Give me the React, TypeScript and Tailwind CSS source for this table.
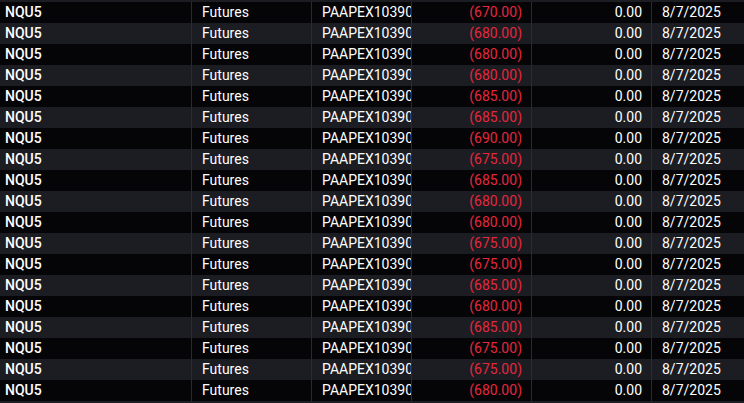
import React from "react";

const values = [
  "670.00", "680.00", "680.00", "680.00", "685.00", "685.00", "690.00", "675.00",
  "685.00", "680.00", "680.00", "675.00", "675.00", "685.00", "680.00", "685.00",
  "675.00", "675.00", "680.00",
];

export default function App() {
  return (
    <div
      className="w-[744px] h-[403px] overflow-hidden bg-[#050507] border-t-2 border-b-2 border-[#1c1d22] text-white text-[14px]"
      style={{ fontFamily: "Roboto, 'Liberation Sans', sans-serif" }}
    >
      {values.map((v, i) => (
        <div
          key={i}
          className={`flex h-[21px] items-center leading-[21px] ${i % 2 === 0 ? "bg-[#050507]" : "bg-[#1c1d22]"}`}
        >
          <div className="w-[191px] shrink-0 pl-[5px] font-medium whitespace-nowrap overflow-hidden">NQU5</div>
          <div className="w-[120px] shrink-0 border-l border-[#2a2b30] pl-[10px] whitespace-nowrap overflow-hidden">Futures</div>
          <div className="w-[100px] shrink-0 border-l border-[#2a2b30] pl-[10px] whitespace-nowrap overflow-hidden">PAAPEX103903</div>
          <div className="w-[120px] shrink-0 border-l border-[#2a2b30] pr-[9px] text-right text-[#e5273d] whitespace-nowrap overflow-hidden">({v})</div>
          <div className="w-[120px] shrink-0 border-l border-[#2a2b30] pr-[9px] text-right whitespace-nowrap overflow-hidden">0.00</div>
          <div className="flex-1 border-l border-[#2a2b30] pl-[10px] whitespace-nowrap overflow-hidden">8/7/2025</div>
        </div>
      ))}
    </div>
  );
}
